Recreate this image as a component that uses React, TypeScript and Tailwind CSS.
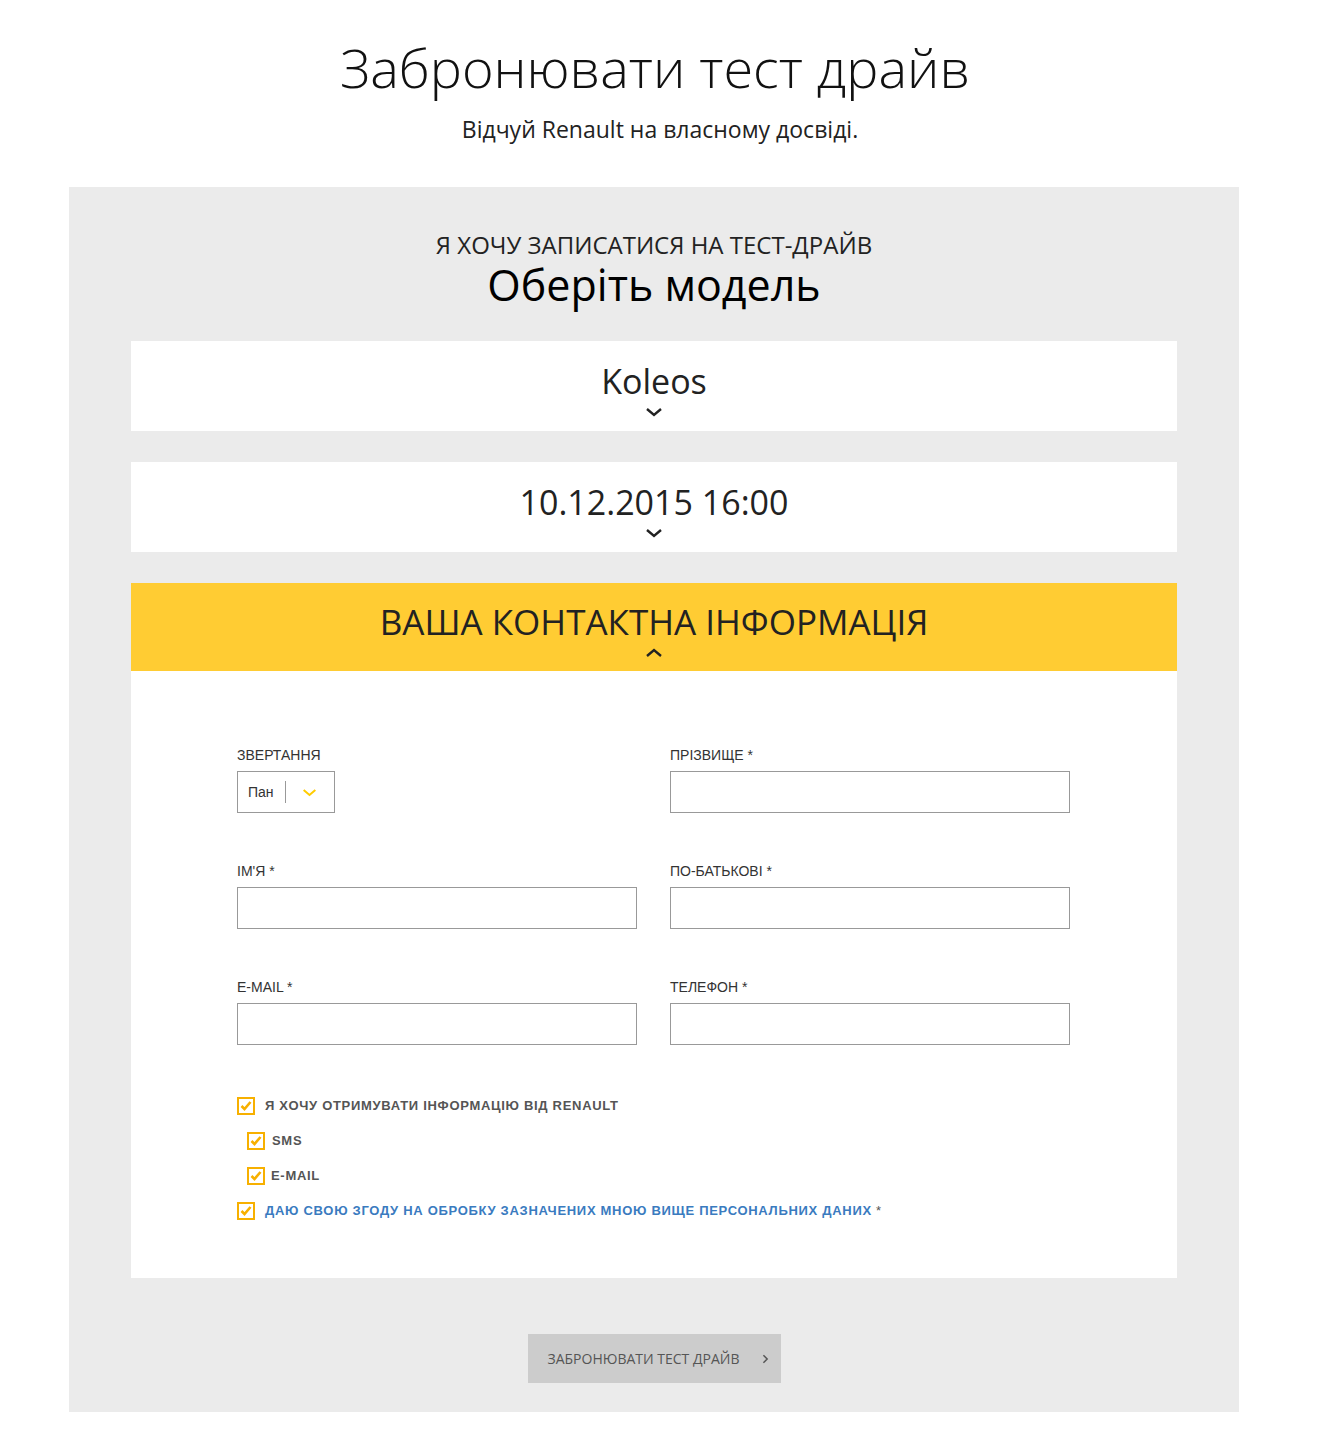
import React from "react";

const heading = { fontFamily: '"Open Sans", "Noto Sans", sans-serif' };
const arial = { fontFamily: '"Liberation Sans", Arial, sans-serif' };

function ChevronDown({ className = "" }: { className?: string }) {
  return (
    <svg viewBox="0 0 18 10" className={className} fill="none" stroke="currentColor" strokeWidth="2.4">
      <path d="M2 2l7 6 7-6" />
    </svg>
  );
}

function ChevronUp({ className = "" }: { className?: string }) {
  return (
    <svg viewBox="0 0 18 10" className={className} fill="none" stroke="currentColor" strokeWidth="2.4">
      <path d="M2 8l7-6 7 6" />
    </svg>
  );
}

function Check() {
  return (
    <span className="flex h-[18px] w-[18px] items-center justify-center border-2 border-[#f7b000] bg-white">
      <svg viewBox="0 0 12 10" className="h-[10px] w-[12px]" fill="none" stroke="#f7b000" strokeWidth="2.6">
        <path d="M1.5 5l3 3 6-7" />
      </svg>
    </span>
  );
}

function Field({ label }: { label: string }) {
  return (
    <div className="flex flex-col">
      <label className="mb-[8px] text-[14px] leading-[16px] text-[#333]" style={arial}>
        {label}
      </label>
      <div className="h-[42px] w-[400px] border border-[#999] bg-white" />
    </div>
  );
}

function SelectBox({ label }: { label: string }) {
  return (
    <div className="flex h-[90px] flex-col items-center bg-white pt-[19px] text-[#222]">
      <div className="text-[34px] leading-[42px]" style={heading}>
        {label}
      </div>
      <ChevronDown className="mt-[5px] h-[10px] w-[18px]" />
    </div>
  );
}

export default function App() {
  return (
    <div className="min-h-[1443px] bg-white">
      <div className="pt-[35px] text-center text-[#111]">
        <h1 className="pr-[10px] text-[54px] font-light leading-[64px]" style={heading}>
          Забронювати тест драйв
        </h1>
        <p className="mt-[17px] text-[23px] leading-[26px] text-[#222]" style={heading}>
          Відчуй Renault на власному досвіді.
        </p>
      </div>

      <div className="mx-[69px] mt-[45px] w-[1170px] bg-[#ebebeb] px-[62px] pb-[29px] pt-[46px]">
        <div className="flex flex-col items-center text-center">
          <div className="text-[24px] leading-[24px] text-[#222]" style={heading}>
            Я ХОЧУ ЗАПИСАТИСЯ НА ТЕСТ-ДРАЙВ
          </div>
          <div className="mt-[7px] text-[43px] leading-[42px] text-black" style={heading}>
            Оберіть модель
          </div>
        </div>

        <div className="mt-[35px] flex flex-col gap-[31px]">
          <SelectBox label="Koleos" />
          <SelectBox label="10.12.2015 16:00" />
          <div>
            <div className="flex h-[88px] flex-col items-center bg-[#ffcc33] pt-[18px] text-[#222]">
              <div className="text-[35px] leading-[42px]" style={heading}>
                ВАША КОНТАКТНА ІНФОРМАЦІЯ
              </div>
              <ChevronUp className="mt-[5px] h-[10px] w-[18px]" />
            </div>
            <div className="bg-white px-[106px] pb-[58px] pt-[76px]">
              <div className="grid grid-cols-[400px_400px] gap-x-[33px] gap-y-[50px]">
                <div className="flex flex-col">
                  <label className="mb-[8px] text-[14px] leading-[16px] text-[#333]" style={arial}>
                    ЗВЕРТАННЯ
                  </label>
                  <div className="flex h-[42px] w-[98px] items-center border border-[#999] bg-white" style={arial}>
                    <span className="pl-[10px] text-[14px] text-[#333]">Пан</span>
                    <span className="ml-[11px] h-[22px] w-px bg-[#999]" />
                    <ChevronDown className="ml-[16px] h-[9px] w-[15px] text-[#ffcc00]" />
                  </div>
                </div>
                <Field label="ПРІЗВИЩЕ *" />
                <Field label="ІМ'Я *" />
                <Field label="ПО-БАТЬКОВІ *" />
                <Field label="E-MAIL *" />
                <Field label="ТЕЛЕФОН *" />
              </div>

              <div className="mt-[52px] flex flex-col gap-[17px] text-[13px] font-bold leading-[18px] tracking-[0.7px]" style={arial}>
                <div className="flex items-center gap-[10px] text-[#555]">
                  <Check />
                  <span>Я ХОЧУ ОТРИМУВАТИ ІНФОРМАЦІЮ ВІД RENAULT</span>
                </div>
                <div className="ml-[10px] flex items-center gap-[7px] text-[#555]">
                  <Check />
                  <span>SMS</span>
                </div>
                <div className="ml-[10px] flex items-center gap-[6px] text-[#555]">
                  <Check />
                  <span>E-MAIL</span>
                </div>
                <div className="flex items-center gap-[10px] text-[#3a7bbf]">
                  <Check />
                  <span>
                    ДАЮ СВОЮ ЗГОДУ НА ОБРОБКУ ЗАЗНАЧЕНИХ МНОЮ ВИЩЕ ПЕРСОНАЛЬНИХ ДАНИХ
                    <span className="font-normal text-[#555]"> *</span>
                  </span>
                </div>
              </div>
            </div>
          </div>
        </div>

        <div className="mt-[56px] flex justify-center">
          <button
            className="flex h-[49px] w-[253px] items-center justify-between bg-[#cccccc] pl-[20px] pr-[12px] text-[14px] text-[#555]"
            style={heading}
          >
            <span>ЗАБРОНЮВАТИ ТЕСТ ДРАЙВ</span>
            <svg viewBox="0 0 8 12" className="h-[10px] w-[7px]" fill="none" stroke="#555" strokeWidth="1.8">
              <path d="M1.5 1.5l4.5 4.5-4.5 4.5" />
            </svg>
          </button>
        </div>
      </div>
    </div>
  );
}
